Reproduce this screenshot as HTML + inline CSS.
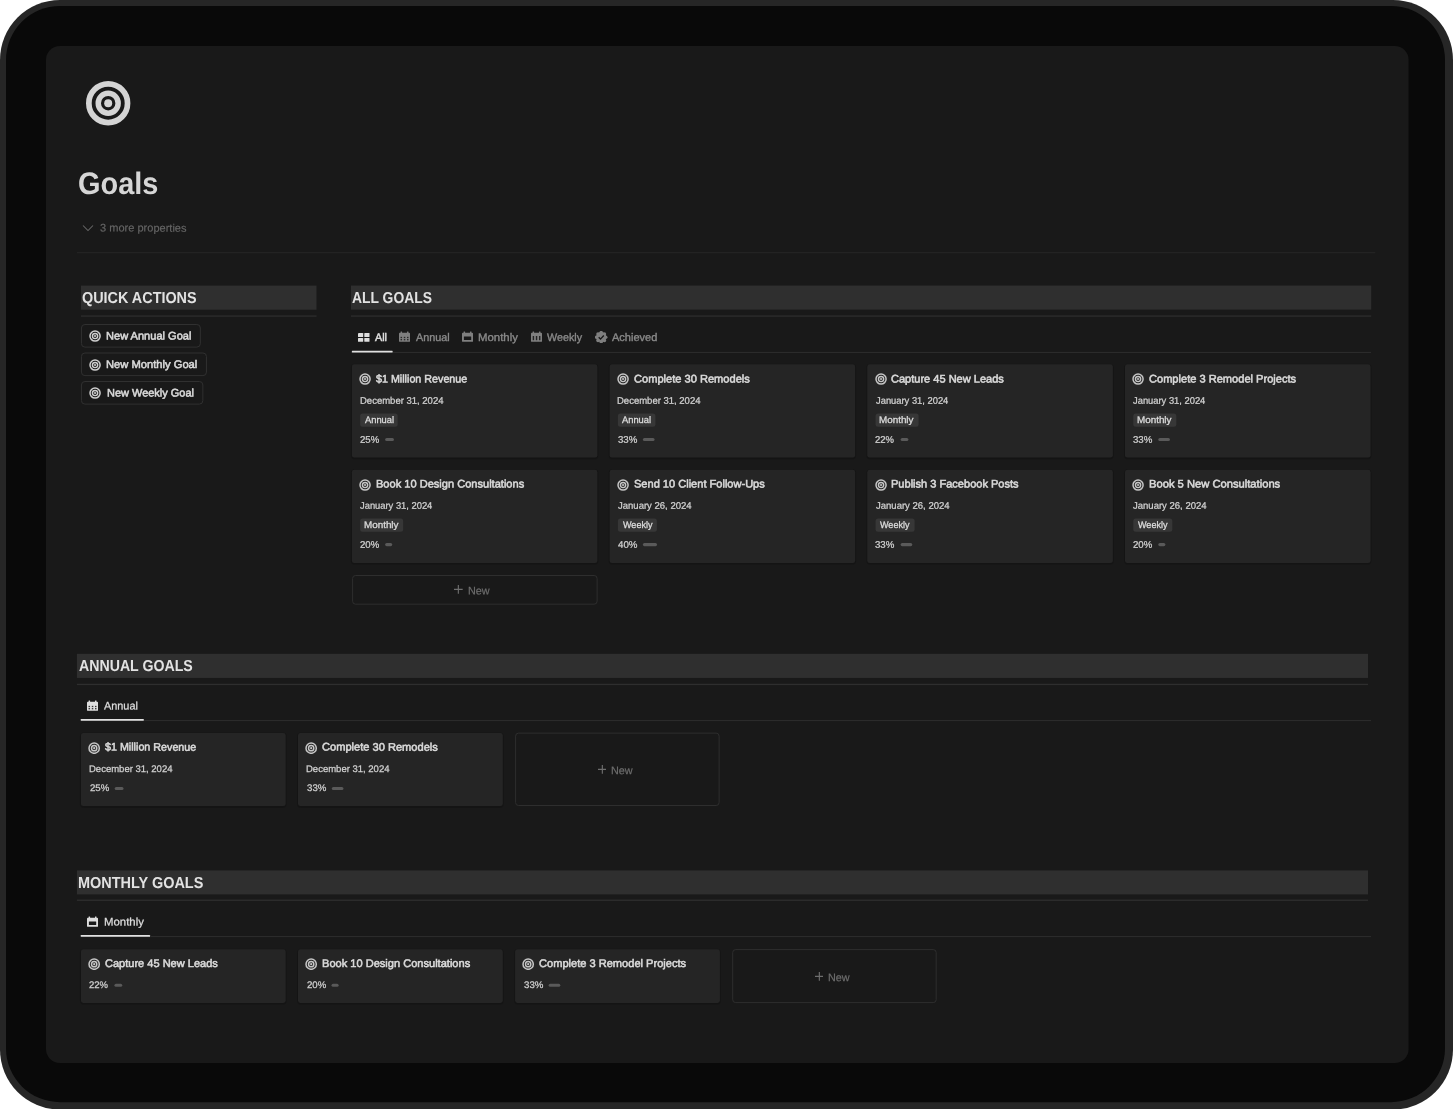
<!DOCTYPE html><html><head><meta charset="utf-8"><title>Goals</title><style>
*{box-sizing:border-box;margin:0;padding:0}
html,body{width:1456px;height:1109px;overflow:hidden;background:#fff}
body{font-family:"Liberation Sans",sans-serif;color:#d4d4d4;position:relative}
.abs{position:absolute}
.t{position:absolute;white-space:nowrap;text-rendering:geometricPrecision}
</style></head><body>
<div id="root" style="position:absolute;left:0;top:0;width:1456px;height:1109px;will-change:transform">
<svg class="abs" style="left:0;top:0" width="1456" height="1109" viewBox="0 0 1456 1109"><rect x="0.00" y="0.00" width="1453.00" height="1109.50" fill="#262626" rx="60"/><rect x="6.00" y="6.00" width="1439.00" height="1096.20" fill="#090909" rx="54"/><rect x="46.00" y="46.00" width="1362.60" height="1017.00" fill="#191919" rx="14"/><rect x="77.00" y="252.20" width="1298.20" height="1.00" fill="#272727"/><rect x="80.95" y="285.60" width="235.55" height="24.10" fill="#2f2f2f"/><rect x="80.95" y="315.40" width="235.55" height="1.30" fill="#2e2e2e"/><rect x="81.45" y="324.50" width="118.90" height="22.60" fill="none" rx="3.5" stroke="#303030" stroke-width="1"/><rect x="81.45" y="353.00" width="125.00" height="22.60" fill="none" rx="3.5" stroke="#303030" stroke-width="1"/><rect x="81.45" y="381.50" width="121.40" height="22.60" fill="none" rx="3.5" stroke="#303030" stroke-width="1"/><rect x="351.00" y="285.55" width="1020.20" height="24.10" fill="#2f2f2f"/><rect x="351.00" y="315.40" width="1020.20" height="1.30" fill="#2e2e2e"/><rect x="351.00" y="351.90" width="1020.00" height="1.10" fill="#2b2b2b"/><rect x="350.85" y="363.70" width="247.55" height="95.70" fill="#000" rx="4" fill-opacity="0.16"/><rect x="351.85" y="364.30" width="245.55" height="93.30" fill="#252525" rx="2.4"/><rect x="360.15" y="413.45" width="37.50" height="13.30" fill="#373737" rx="2.5"/><rect x="385.15" y="437.95" width="8.82" height="3.10" fill="#5a5a5a" rx="1.55"/><rect x="608.60" y="363.70" width="247.55" height="95.70" fill="#000" rx="4" fill-opacity="0.16"/><rect x="609.60" y="364.30" width="245.55" height="93.30" fill="#252525" rx="2.4"/><rect x="617.90" y="413.45" width="37.50" height="13.30" fill="#373737" rx="2.5"/><rect x="642.90" y="437.95" width="11.65" height="3.10" fill="#5a5a5a" rx="1.55"/><rect x="866.30" y="363.70" width="247.55" height="95.70" fill="#000" rx="4" fill-opacity="0.16"/><rect x="867.30" y="364.30" width="245.55" height="93.30" fill="#252525" rx="2.4"/><rect x="875.60" y="413.45" width="43.00" height="13.30" fill="#373737" rx="2.5"/><rect x="900.60" y="437.95" width="7.77" height="3.10" fill="#5a5a5a" rx="1.55"/><rect x="1124.00" y="363.70" width="247.55" height="95.70" fill="#000" rx="4" fill-opacity="0.16"/><rect x="1125.00" y="364.30" width="245.55" height="93.30" fill="#252525" rx="2.4"/><rect x="1133.30" y="413.45" width="43.00" height="13.30" fill="#373737" rx="2.5"/><rect x="1158.30" y="437.95" width="11.65" height="3.10" fill="#5a5a5a" rx="1.55"/><rect x="350.85" y="469.15" width="247.55" height="95.70" fill="#000" rx="4" fill-opacity="0.16"/><rect x="351.85" y="469.75" width="245.55" height="93.30" fill="#252525" rx="2.4"/><rect x="360.15" y="518.45" width="43.00" height="13.30" fill="#373737" rx="2.5"/><rect x="385.15" y="543.05" width="7.06" height="3.10" fill="#5a5a5a" rx="1.55"/><rect x="608.60" y="469.15" width="247.55" height="95.70" fill="#000" rx="4" fill-opacity="0.16"/><rect x="609.60" y="469.75" width="245.55" height="93.30" fill="#252525" rx="2.4"/><rect x="617.90" y="518.45" width="39.00" height="13.30" fill="#373737" rx="2.5"/><rect x="642.90" y="543.05" width="14.12" height="3.10" fill="#5a5a5a" rx="1.55"/><rect x="866.30" y="469.15" width="247.55" height="95.70" fill="#000" rx="4" fill-opacity="0.16"/><rect x="867.30" y="469.75" width="245.55" height="93.30" fill="#252525" rx="2.4"/><rect x="875.60" y="518.45" width="39.00" height="13.30" fill="#373737" rx="2.5"/><rect x="900.60" y="543.05" width="11.65" height="3.10" fill="#5a5a5a" rx="1.55"/><rect x="1124.00" y="469.15" width="247.55" height="95.70" fill="#000" rx="4" fill-opacity="0.16"/><rect x="1125.00" y="469.75" width="245.55" height="93.30" fill="#252525" rx="2.4"/><rect x="1133.30" y="518.45" width="39.00" height="13.30" fill="#373737" rx="2.5"/><rect x="1158.30" y="543.05" width="7.06" height="3.10" fill="#5a5a5a" rx="1.55"/><rect x="352.60" y="575.50" width="244.50" height="28.70" fill="none" rx="3" stroke="#2e2e2e" stroke-width="1"/><rect x="76.90" y="653.85" width="1291.10" height="24.10" fill="#2f2f2f"/><rect x="76.90" y="683.80" width="1291.10" height="1.30" fill="#2e2e2e"/><rect x="81.00" y="720.00" width="1290.00" height="1.10" fill="#2b2b2b"/><rect x="79.90" y="732.50" width="206.80" height="75.40" fill="#000" rx="4" fill-opacity="0.16"/><rect x="80.90" y="733.10" width="204.80" height="73.00" fill="#252525" rx="2.4"/><rect x="114.70" y="786.95" width="8.82" height="3.10" fill="#5a5a5a" rx="1.55"/><rect x="297.00" y="732.50" width="206.80" height="75.40" fill="#000" rx="4" fill-opacity="0.16"/><rect x="298.00" y="733.10" width="204.80" height="73.00" fill="#252525" rx="2.4"/><rect x="331.80" y="786.95" width="11.65" height="3.10" fill="#5a5a5a" rx="1.55"/><rect x="515.60" y="733.10" width="203.50" height="72.40" fill="none" rx="3" stroke="#2e2e2e" stroke-width="1"/><rect x="76.90" y="870.40" width="1291.10" height="24.00" fill="#2f2f2f"/><rect x="76.90" y="899.60" width="1291.10" height="1.30" fill="#2e2e2e"/><rect x="81.00" y="936.00" width="1290.00" height="1.10" fill="#2b2b2b"/><rect x="79.90" y="948.65" width="206.80" height="56.15" fill="#000" rx="4" fill-opacity="0.16"/><rect x="80.90" y="949.25" width="204.80" height="53.75" fill="#252525" rx="2.4"/><rect x="114.45" y="983.75" width="7.77" height="3.10" fill="#5a5a5a" rx="1.55"/><rect x="297.00" y="948.65" width="206.80" height="56.15" fill="#000" rx="4" fill-opacity="0.16"/><rect x="298.00" y="949.25" width="204.80" height="53.75" fill="#252525" rx="2.4"/><rect x="331.55" y="983.75" width="7.06" height="3.10" fill="#5a5a5a" rx="1.55"/><rect x="514.10" y="948.65" width="206.80" height="56.15" fill="#000" rx="4" fill-opacity="0.16"/><rect x="515.10" y="949.25" width="204.80" height="53.75" fill="#252525" rx="2.4"/><rect x="548.65" y="983.75" width="11.65" height="3.10" fill="#5a5a5a" rx="1.55"/><rect x="732.70" y="949.60" width="203.50" height="53.00" fill="none" rx="3" stroke="#2e2e2e" stroke-width="1"/></svg>
<svg class="abs" style="left:85.30px;top:79.60px" width="46.40" height="46.40" viewBox="-1 -1 46.4 46.4"><circle cx="22.2" cy="22.2" r="19.35" fill="none" stroke="#d4d4d4" stroke-width="5.7"/><circle cx="22.2" cy="22.2" r="9.95" fill="none" stroke="#d4d4d4" stroke-width="5.5"/><circle cx="22.2" cy="22.2" r="4" fill="#d4d4d4"/></svg>
<div class="t" style="left:78.21px;top:164px;font-size:31px;line-height:39px;color:#d6d6d6;font-weight:700;transform:scaleX(0.9338);transform-origin:0 0;">Goals</div>
<svg class="abs" style="left:81.5px;top:223.4px" width="12" height="10" viewBox="0 0 12 10"><path d="M1 2.5 L6 7.5 L11 2.5" fill="none" stroke="#676767" stroke-width="1.05"/></svg>
<div class="t" style="left:100.33px;top:221px;font-size:11px;line-height:16px;color:#656565;transform:translateY(-0.40px) rotate(0.03deg) scaleX(1.0036);transform-origin:0 0;-webkit-text-stroke:0.15px #656565;">3 more properties</div>
<div class="t" style="left:82.06px;top:288px;font-size:15.85px;line-height:22px;color:#e2e2e2;font-weight:700;transform:scaleX(0.9084);transform-origin:0 0;">QUICK ACTIONS</div>
<svg class="abs" style="left:88.79px;top:330.04px" width="12.12" height="12.12" viewBox="-1 -1 46.4 46.4"><circle cx="22.2" cy="22.2" r="19.35" fill="none" stroke="#cfcfcf" stroke-width="5.7"/><circle cx="22.2" cy="22.2" r="9.95" fill="none" stroke="#cfcfcf" stroke-width="5.5"/><circle cx="22.2" cy="22.2" r="4" fill="#cfcfcf"/></svg>
<div class="t" style="left:106.49px;top:329px;font-size:11px;line-height:16px;color:#dadada;transform:translateY(-0.50px) rotate(0.03deg) scaleX(1.0052);transform-origin:0 0;-webkit-text-stroke:0.55px #dadada;">New Annual Goal</div>
<svg class="abs" style="left:88.79px;top:358.54px" width="12.12" height="12.12" viewBox="-1 -1 46.4 46.4"><circle cx="22.2" cy="22.2" r="19.35" fill="none" stroke="#cfcfcf" stroke-width="5.7"/><circle cx="22.2" cy="22.2" r="9.95" fill="none" stroke="#cfcfcf" stroke-width="5.5"/><circle cx="22.2" cy="22.2" r="4" fill="#cfcfcf"/></svg>
<div class="t" style="left:106.48px;top:357px;font-size:11px;line-height:16px;color:#dadada;transform:scaleX(1.0160);transform-origin:0 0;-webkit-text-stroke:0.55px #dadada;">New Monthly Goal</div>
<svg class="abs" style="left:88.79px;top:387.04px" width="12.12" height="12.12" viewBox="-1 -1 46.4 46.4"><circle cx="22.2" cy="22.2" r="19.35" fill="none" stroke="#cfcfcf" stroke-width="5.7"/><circle cx="22.2" cy="22.2" r="9.95" fill="none" stroke="#cfcfcf" stroke-width="5.5"/><circle cx="22.2" cy="22.2" r="4" fill="#cfcfcf"/></svg>
<div class="t" style="left:106.50px;top:386px;font-size:11px;line-height:16px;color:#dadada;transform:translateY(-0.50px) rotate(0.03deg) scaleX(0.9978);transform-origin:0 0;-webkit-text-stroke:0.55px #dadada;">New Weekly Goal</div>
<div class="t" style="left:352.32px;top:288px;font-size:15.85px;line-height:22px;color:#e2e2e2;font-weight:700;transform:scaleX(0.8761);transform-origin:0 0;">ALL GOALS</div>
<svg class="abs" style="left:358px;top:333.1px" width="11.5" height="8.8" viewBox="0 0 11.5 8.8"><rect x="0" y="0" width="5.2" height="3.9" rx="0.5" fill="#dedede"/><rect x="6.3" y="0" width="5.2" height="3.9" rx="0.5" fill="#dedede"/><rect x="0" y="4.9" width="5.2" height="3.9" rx="0.5" fill="#dedede"/><rect x="6.3" y="4.9" width="5.2" height="3.9" rx="0.5" fill="#dedede"/></svg>
<div class="t" style="left:374.58px;top:331px;font-size:11px;line-height:16px;color:#e0e0e0;transform:translateY(-0.90px) rotate(0.03deg) scaleX(0.9806);transform-origin:0 0;-webkit-text-stroke:0.45px #e0e0e0;">All</div>
<svg class="abs" style="left:398.9px;top:331.2px" width="11.1" height="10.8" viewBox="0 0 11.1 10.8"><rect x="0" y="1.8" width="11.1" height="9" rx="0.9" fill="#7f7f7f"/><rect x="1.6" y="0.4" width="1.5" height="3" rx="0.4" fill="#7f7f7f"/><rect x="8" y="0.4" width="1.5" height="3" rx="0.4" fill="#7f7f7f"/><rect x="1.55" y="5.85" width="1.5" height="1.3" fill="#191919" fill-opacity="0.85"/><rect x="1.55" y="8.05" width="1.5" height="1.3" fill="#191919" fill-opacity="0.85"/><rect x="4.80" y="5.85" width="1.5" height="1.3" fill="#191919" fill-opacity="0.85"/><rect x="4.80" y="8.05" width="1.5" height="1.3" fill="#191919" fill-opacity="0.85"/><rect x="8.00" y="5.85" width="1.5" height="1.3" fill="#191919" fill-opacity="0.85"/><rect x="8.00" y="8.05" width="1.5" height="1.3" fill="#191919" fill-opacity="0.85"/></svg>
<div class="t" style="left:415.73px;top:331px;font-size:11px;line-height:16px;color:#8a8a8a;transform:translateY(-0.90px) rotate(0.03deg) scaleX(0.9849);transform-origin:0 0;-webkit-text-stroke:0.35px #8a8a8a;">Annual</div>
<svg class="abs" style="left:462.0px;top:331.2px" width="11.1" height="10.8" viewBox="0 0 11.1 10.8"><rect x="0" y="1.8" width="11.1" height="9" rx="0.9" fill="#7f7f7f"/><rect x="1.6" y="0.4" width="1.5" height="3" rx="0.4" fill="#7f7f7f"/><rect x="8" y="0.4" width="1.5" height="3" rx="0.4" fill="#7f7f7f"/><rect x="1.9" y="5.5" width="7.3" height="3.6" rx="0.3" fill="#191919"/></svg>
<div class="t" style="left:477.92px;top:331px;font-size:11px;line-height:16px;color:#8a8a8a;transform:translateY(-0.90px) rotate(0.03deg) scaleX(1.0349);transform-origin:0 0;-webkit-text-stroke:0.35px #8a8a8a;">Monthly</div>
<svg class="abs" style="left:531.2px;top:331.2px" width="11.1" height="10.8" viewBox="0 0 11.1 10.8"><rect x="0" y="1.8" width="11.1" height="9" rx="0.9" fill="#7f7f7f"/><rect x="1.6" y="0.4" width="1.5" height="3" rx="0.4" fill="#7f7f7f"/><rect x="8" y="0.4" width="1.5" height="3" rx="0.4" fill="#7f7f7f"/><rect x="1.70" y="5" width="1.4" height="4.2" fill="#191919" fill-opacity="0.9"/><rect x="4.85" y="5" width="1.4" height="4.2" fill="#191919" fill-opacity="0.9"/><rect x="8.00" y="5" width="1.4" height="4.2" fill="#191919" fill-opacity="0.9"/></svg>
<div class="t" style="left:547.31px;top:331px;font-size:11px;line-height:16px;color:#8a8a8a;transform:translateY(-0.90px) rotate(0.03deg) scaleX(0.9778);transform-origin:0 0;-webkit-text-stroke:0.35px #8a8a8a;">Weekly</div>
<svg class="abs" style="left:595.2px;top:331.1px" width="12.4" height="12.4" viewBox="0 0 12.4 12.4"><circle cx="6.2" cy="6.2" r="5.1" fill="#7f7f7f"/><circle cx="10.75" cy="6.20" r="1.75" fill="#7f7f7f"/><circle cx="9.42" cy="9.42" r="1.75" fill="#7f7f7f"/><circle cx="6.20" cy="10.75" r="1.75" fill="#7f7f7f"/><circle cx="2.98" cy="9.42" r="1.75" fill="#7f7f7f"/><circle cx="1.65" cy="6.20" r="1.75" fill="#7f7f7f"/><circle cx="2.98" cy="2.98" r="1.75" fill="#7f7f7f"/><circle cx="6.20" cy="1.65" r="1.75" fill="#7f7f7f"/><circle cx="9.42" cy="2.98" r="1.75" fill="#7f7f7f"/><path d="M3.7 6.3l1.8 1.8 3.3-3.6" fill="none" stroke="#191919" stroke-width="1.35"/></svg>
<div class="t" style="left:612.23px;top:331px;font-size:11px;line-height:16px;color:#8a8a8a;transform:translateY(-0.90px) rotate(0.03deg) scaleX(1.0016);transform-origin:0 0;-webkit-text-stroke:0.35px #8a8a8a;">Achieved</div>
<svg class="abs" style="left:350px;top:349px" width="44" height="5" viewBox="0 0 44 5"><rect x="1.85" y="1.80" width="40.8" height="1.7" rx="0.4" fill="#e0e0e0"/></svg>
<svg class="abs" style="left:359.24px;top:373.36px" width="12.12" height="12.12" viewBox="-1 -1 46.4 46.4"><circle cx="22.2" cy="22.2" r="19.35" fill="none" stroke="#c6c6c6" stroke-width="5.7"/><circle cx="22.2" cy="22.2" r="9.95" fill="none" stroke="#c6c6c6" stroke-width="5.5"/><circle cx="22.2" cy="22.2" r="4" fill="#c6c6c6"/></svg>
<div class="t" style="left:375.95px;top:372px;font-size:11px;line-height:16px;color:#dadada;transform:translateY(-0.45px) rotate(0.03deg) scaleX(0.9757);transform-origin:0 0;-webkit-text-stroke:0.55px #dadada;">$1 Million Revenue</div>
<div class="t" style="left:359.52px;top:394px;font-size:9.5px;line-height:15px;color:#d2d2d2;transform:translateY(-0.30px) rotate(0.03deg) scaleX(1.0002);transform-origin:0 0;-webkit-text-stroke:0.25px #d2d2d2;">December 31, 2024</div>
<div class="t" style="left:364.63px;top:413px;font-size:9.5px;line-height:15px;color:#dcdcdc;transform:translateY(-0.10px) rotate(0.03deg) scaleX(0.9814);transform-origin:0 0;-webkit-text-stroke:0.3px #dcdcdc;">Annual</div>
<div class="t" style="left:359.82px;top:433px;font-size:9.5px;line-height:15px;color:#d2d2d2;transform:translateY(-0.30px) rotate(0.03deg) scaleX(1.0109);transform-origin:0 0;-webkit-text-stroke:0.25px #d2d2d2;">25%</div>
<svg class="abs" style="left:616.99px;top:373.36px" width="12.12" height="12.12" viewBox="-1 -1 46.4 46.4"><circle cx="22.2" cy="22.2" r="19.35" fill="none" stroke="#c6c6c6" stroke-width="5.7"/><circle cx="22.2" cy="22.2" r="9.95" fill="none" stroke="#c6c6c6" stroke-width="5.5"/><circle cx="22.2" cy="22.2" r="4" fill="#c6c6c6"/></svg>
<div class="t" style="left:633.70px;top:372px;font-size:11px;line-height:16px;color:#dadada;transform:translateY(-0.45px) rotate(0.03deg) scaleX(1.0079);transform-origin:0 0;-webkit-text-stroke:0.55px #dadada;">Complete 30 Remodels</div>
<div class="t" style="left:617.27px;top:394px;font-size:9.5px;line-height:15px;color:#d2d2d2;transform:translateY(-0.30px) rotate(0.03deg) scaleX(1.0002);transform-origin:0 0;-webkit-text-stroke:0.25px #d2d2d2;">December 31, 2024</div>
<div class="t" style="left:622.38px;top:413px;font-size:9.5px;line-height:15px;color:#dcdcdc;transform:translateY(-0.10px) rotate(0.03deg) scaleX(0.9814);transform-origin:0 0;-webkit-text-stroke:0.3px #dcdcdc;">Annual</div>
<div class="t" style="left:617.68px;top:433px;font-size:9.5px;line-height:15px;color:#d2d2d2;transform:translateY(-0.30px) rotate(0.03deg) scaleX(1.0182);transform-origin:0 0;-webkit-text-stroke:0.25px #d2d2d2;">33%</div>
<svg class="abs" style="left:874.69px;top:373.36px" width="12.12" height="12.12" viewBox="-1 -1 46.4 46.4"><circle cx="22.2" cy="22.2" r="19.35" fill="none" stroke="#c6c6c6" stroke-width="5.7"/><circle cx="22.2" cy="22.2" r="9.95" fill="none" stroke="#c6c6c6" stroke-width="5.5"/><circle cx="22.2" cy="22.2" r="4" fill="#c6c6c6"/></svg>
<div class="t" style="left:891.40px;top:372px;font-size:11px;line-height:16px;color:#dadada;transform:translateY(-0.45px) rotate(0.03deg) scaleX(1.0029);transform-origin:0 0;-webkit-text-stroke:0.55px #dadada;">Capture 45 New Leads</div>
<div class="t" style="left:875.61px;top:394px;font-size:9.5px;line-height:15px;color:#d2d2d2;transform:translateY(-0.30px) rotate(0.03deg) scaleX(0.9850);transform-origin:0 0;-webkit-text-stroke:0.25px #d2d2d2;">January 31, 2024</div>
<div class="t" style="left:879.42px;top:413px;font-size:9.5px;line-height:15px;color:#dcdcdc;transform:translateY(-0.10px) rotate(0.03deg) scaleX(1.0366);transform-origin:0 0;-webkit-text-stroke:0.3px #dcdcdc;">Monthly</div>
<div class="t" style="left:875.28px;top:433px;font-size:9.5px;line-height:15px;color:#d2d2d2;transform:translateY(-0.30px) rotate(0.03deg) scaleX(0.9971);transform-origin:0 0;-webkit-text-stroke:0.25px #d2d2d2;">22%</div>
<svg class="abs" style="left:1132.39px;top:373.36px" width="12.12" height="12.12" viewBox="-1 -1 46.4 46.4"><circle cx="22.2" cy="22.2" r="19.35" fill="none" stroke="#c6c6c6" stroke-width="5.7"/><circle cx="22.2" cy="22.2" r="9.95" fill="none" stroke="#c6c6c6" stroke-width="5.5"/><circle cx="22.2" cy="22.2" r="4" fill="#c6c6c6"/></svg>
<div class="t" style="left:1149.10px;top:372px;font-size:11px;line-height:16px;color:#dadada;transform:translateY(-0.45px) rotate(0.03deg) scaleX(1.0067);transform-origin:0 0;-webkit-text-stroke:0.55px #dadada;">Complete 3 Remodel Projects</div>
<div class="t" style="left:1133.31px;top:394px;font-size:9.5px;line-height:15px;color:#d2d2d2;transform:translateY(-0.30px) rotate(0.03deg) scaleX(0.9850);transform-origin:0 0;-webkit-text-stroke:0.25px #d2d2d2;">January 31, 2024</div>
<div class="t" style="left:1137.12px;top:413px;font-size:9.5px;line-height:15px;color:#dcdcdc;transform:translateY(-0.10px) rotate(0.03deg) scaleX(1.0366);transform-origin:0 0;-webkit-text-stroke:0.3px #dcdcdc;">Monthly</div>
<div class="t" style="left:1133.08px;top:433px;font-size:9.5px;line-height:15px;color:#d2d2d2;transform:translateY(-0.30px) rotate(0.03deg) scaleX(1.0182);transform-origin:0 0;-webkit-text-stroke:0.25px #d2d2d2;">33%</div>
<svg class="abs" style="left:359.24px;top:478.81px" width="12.12" height="12.12" viewBox="-1 -1 46.4 46.4"><circle cx="22.2" cy="22.2" r="19.35" fill="none" stroke="#c6c6c6" stroke-width="5.7"/><circle cx="22.2" cy="22.2" r="9.95" fill="none" stroke="#c6c6c6" stroke-width="5.5"/><circle cx="22.2" cy="22.2" r="4" fill="#c6c6c6"/></svg>
<div class="t" style="left:375.95px;top:477px;font-size:11px;line-height:16px;color:#dadada;transform:translateY(-0.45px) rotate(0.03deg) scaleX(1.0057);transform-origin:0 0;-webkit-text-stroke:0.55px #dadada;">Book 10 Design Consultations</div>
<div class="t" style="left:360.16px;top:499px;font-size:9.5px;line-height:15px;color:#d2d2d2;transform:translateY(-0.30px) rotate(0.03deg) scaleX(0.9850);transform-origin:0 0;-webkit-text-stroke:0.25px #d2d2d2;">January 31, 2024</div>
<div class="t" style="left:363.97px;top:518px;font-size:9.5px;line-height:15px;color:#dcdcdc;transform:translateY(-0.10px) rotate(0.03deg) scaleX(1.0366);transform-origin:0 0;-webkit-text-stroke:0.3px #dcdcdc;">Monthly</div>
<div class="t" style="left:359.82px;top:538px;font-size:9.5px;line-height:15px;color:#d2d2d2;transform:translateY(-0.30px) rotate(0.03deg) scaleX(1.0109);transform-origin:0 0;-webkit-text-stroke:0.25px #d2d2d2;">20%</div>
<svg class="abs" style="left:616.99px;top:478.81px" width="12.12" height="12.12" viewBox="-1 -1 46.4 46.4"><circle cx="22.2" cy="22.2" r="19.35" fill="none" stroke="#c6c6c6" stroke-width="5.7"/><circle cx="22.2" cy="22.2" r="9.95" fill="none" stroke="#c6c6c6" stroke-width="5.5"/><circle cx="22.2" cy="22.2" r="4" fill="#c6c6c6"/></svg>
<div class="t" style="left:633.70px;top:477px;font-size:11px;line-height:16px;color:#dadada;transform:translateY(-0.45px) rotate(0.03deg) scaleX(1.0043);transform-origin:0 0;-webkit-text-stroke:0.55px #dadada;">Send 10 Client Follow-Ups</div>
<div class="t" style="left:617.91px;top:499px;font-size:9.5px;line-height:15px;color:#d2d2d2;transform:translateY(-0.30px) rotate(0.03deg) scaleX(1.0021);transform-origin:0 0;-webkit-text-stroke:0.25px #d2d2d2;">January 26, 2024</div>
<div class="t" style="left:622.61px;top:518px;font-size:9.5px;line-height:15px;color:#dcdcdc;transform:translateY(-0.10px) rotate(0.03deg) scaleX(0.9511);transform-origin:0 0;-webkit-text-stroke:0.3px #dcdcdc;">Weekly</div>
<div class="t" style="left:617.84px;top:538px;font-size:9.5px;line-height:15px;color:#d2d2d2;transform:translateY(-0.30px) rotate(0.03deg) scaleX(1.0234);transform-origin:0 0;-webkit-text-stroke:0.25px #d2d2d2;">40%</div>
<svg class="abs" style="left:874.69px;top:478.81px" width="12.12" height="12.12" viewBox="-1 -1 46.4 46.4"><circle cx="22.2" cy="22.2" r="19.35" fill="none" stroke="#c6c6c6" stroke-width="5.7"/><circle cx="22.2" cy="22.2" r="9.95" fill="none" stroke="#c6c6c6" stroke-width="5.5"/><circle cx="22.2" cy="22.2" r="4" fill="#c6c6c6"/></svg>
<div class="t" style="left:891.40px;top:477px;font-size:11px;line-height:16px;color:#dadada;transform:translateY(-0.45px) rotate(0.03deg) scaleX(1.0033);transform-origin:0 0;-webkit-text-stroke:0.55px #dadada;">Publish 3 Facebook Posts</div>
<div class="t" style="left:875.61px;top:499px;font-size:9.5px;line-height:15px;color:#d2d2d2;transform:translateY(-0.30px) rotate(0.03deg) scaleX(1.0021);transform-origin:0 0;-webkit-text-stroke:0.25px #d2d2d2;">January 26, 2024</div>
<div class="t" style="left:880.31px;top:518px;font-size:9.5px;line-height:15px;color:#dcdcdc;transform:translateY(-0.10px) rotate(0.03deg) scaleX(0.9511);transform-origin:0 0;-webkit-text-stroke:0.3px #dcdcdc;">Weekly</div>
<div class="t" style="left:875.38px;top:538px;font-size:9.5px;line-height:15px;color:#d2d2d2;transform:translateY(-0.30px) rotate(0.03deg) scaleX(1.0182);transform-origin:0 0;-webkit-text-stroke:0.25px #d2d2d2;">33%</div>
<svg class="abs" style="left:1132.39px;top:478.81px" width="12.12" height="12.12" viewBox="-1 -1 46.4 46.4"><circle cx="22.2" cy="22.2" r="19.35" fill="none" stroke="#c6c6c6" stroke-width="5.7"/><circle cx="22.2" cy="22.2" r="9.95" fill="none" stroke="#c6c6c6" stroke-width="5.5"/><circle cx="22.2" cy="22.2" r="4" fill="#c6c6c6"/></svg>
<div class="t" style="left:1149.10px;top:477px;font-size:11px;line-height:16px;color:#dadada;transform:translateY(-0.45px) rotate(0.03deg) scaleX(1.0171);transform-origin:0 0;-webkit-text-stroke:0.55px #dadada;">Book 5 New Consultations</div>
<div class="t" style="left:1133.31px;top:499px;font-size:9.5px;line-height:15px;color:#d2d2d2;transform:translateY(-0.30px) rotate(0.03deg) scaleX(1.0021);transform-origin:0 0;-webkit-text-stroke:0.25px #d2d2d2;">January 26, 2024</div>
<div class="t" style="left:1138.01px;top:518px;font-size:9.5px;line-height:15px;color:#dcdcdc;transform:translateY(-0.10px) rotate(0.03deg) scaleX(0.9511);transform-origin:0 0;-webkit-text-stroke:0.3px #dcdcdc;">Weekly</div>
<div class="t" style="left:1132.97px;top:538px;font-size:9.5px;line-height:15px;color:#d2d2d2;transform:translateY(-0.30px) rotate(0.03deg) scaleX(1.0109);transform-origin:0 0;-webkit-text-stroke:0.25px #d2d2d2;">20%</div>
<svg class="abs" style="left:454.2px;top:585.35px" width="8.7" height="8.7" viewBox="0 0 8.7 8.7"><path d="M4.35 0V8.7M0 4.35H8.7" stroke="#6e6e6e" stroke-width="1.15"/></svg>
<div class="t" style="left:467.96px;top:584px;font-size:11px;line-height:16px;color:#6e6e6e;transform:translateY(-0.50px) rotate(0.03deg) scaleX(0.9843);transform-origin:0 0;-webkit-text-stroke:0.2px #6e6e6e;">New</div>
<div class="t" style="left:78.66px;top:657px;font-size:15.85px;line-height:22px;color:#e2e2e2;font-weight:700;transform:translateY(-0.90px) rotate(0.03deg) scaleX(0.8933);transform-origin:0 0;">ANNUAL GOALS</div>
<svg class="abs" style="left:87px;top:699.9px" width="11.1" height="10.8" viewBox="0 0 11.1 10.8"><rect x="0" y="1.8" width="11.1" height="9" rx="0.9" fill="#dedede"/><rect x="1.6" y="0.4" width="1.5" height="3" rx="0.4" fill="#dedede"/><rect x="8" y="0.4" width="1.5" height="3" rx="0.4" fill="#dedede"/><rect x="1.55" y="5.85" width="1.5" height="1.3" fill="#191919" fill-opacity="0.85"/><rect x="1.55" y="8.05" width="1.5" height="1.3" fill="#191919" fill-opacity="0.85"/><rect x="4.80" y="5.85" width="1.5" height="1.3" fill="#191919" fill-opacity="0.85"/><rect x="4.80" y="8.05" width="1.5" height="1.3" fill="#191919" fill-opacity="0.85"/><rect x="8.00" y="5.85" width="1.5" height="1.3" fill="#191919" fill-opacity="0.85"/><rect x="8.00" y="8.05" width="1.5" height="1.3" fill="#191919" fill-opacity="0.85"/></svg>
<div class="t" style="left:103.63px;top:699px;font-size:11px;line-height:16px;color:#dedede;transform:translateY(-0.50px) rotate(0.03deg) scaleX(0.9894);transform-origin:0 0;-webkit-text-stroke:0.25px #dedede;">Annual</div>
<svg class="abs" style="left:79px;top:718px" width="67" height="5" viewBox="0 0 67 5"><rect x="1.75" y="1.10" width="63" height="1.7" rx="0.4" fill="#e0e0e0"/></svg>
<svg class="abs" style="left:88.28px;top:741.68px" width="12.33" height="12.33" viewBox="-1 -1 46.4 46.4"><circle cx="22.2" cy="22.2" r="19.35" fill="none" stroke="#c6c6c6" stroke-width="5.7"/><circle cx="22.2" cy="22.2" r="9.95" fill="none" stroke="#c6c6c6" stroke-width="5.5"/><circle cx="22.2" cy="22.2" r="4" fill="#c6c6c6"/></svg>
<div class="t" style="left:105.10px;top:740px;font-size:11px;line-height:16px;color:#dadada;transform:translateY(-0.40px) rotate(0.03deg) scaleX(0.9757);transform-origin:0 0;-webkit-text-stroke:0.55px #dadada;">$1 Million Revenue</div>
<div class="t" style="left:89.27px;top:762px;font-size:9.5px;line-height:15px;color:#d2d2d2;transform:scaleX(1.0002);transform-origin:0 0;-webkit-text-stroke:0.25px #d2d2d2;">December 31, 2024</div>
<div class="t" style="left:89.57px;top:781px;font-size:9.5px;line-height:15px;color:#d2d2d2;transform:scaleX(1.0109);transform-origin:0 0;-webkit-text-stroke:0.25px #d2d2d2;">25%</div>
<svg class="abs" style="left:305.38px;top:741.68px" width="12.33" height="12.33" viewBox="-1 -1 46.4 46.4"><circle cx="22.2" cy="22.2" r="19.35" fill="none" stroke="#c6c6c6" stroke-width="5.7"/><circle cx="22.2" cy="22.2" r="9.95" fill="none" stroke="#c6c6c6" stroke-width="5.5"/><circle cx="22.2" cy="22.2" r="4" fill="#c6c6c6"/></svg>
<div class="t" style="left:322.20px;top:740px;font-size:11px;line-height:16px;color:#dadada;transform:translateY(-0.40px) rotate(0.03deg) scaleX(1.0079);transform-origin:0 0;-webkit-text-stroke:0.55px #dadada;">Complete 30 Remodels</div>
<div class="t" style="left:306.37px;top:762px;font-size:9.5px;line-height:15px;color:#d2d2d2;transform:scaleX(1.0002);transform-origin:0 0;-webkit-text-stroke:0.25px #d2d2d2;">December 31, 2024</div>
<div class="t" style="left:306.78px;top:781px;font-size:9.5px;line-height:15px;color:#d2d2d2;transform:scaleX(1.0182);transform-origin:0 0;-webkit-text-stroke:0.25px #d2d2d2;">33%</div>
<svg class="abs" style="left:597.6px;top:765.0500000000001px" width="8.7" height="8.7" viewBox="0 0 8.7 8.7"><path d="M4.35 0V8.7M0 4.35H8.7" stroke="#6e6e6e" stroke-width="1.15"/></svg>
<div class="t" style="left:611.06px;top:764px;font-size:11px;line-height:16px;color:#6e6e6e;transform:translateY(-0.80px) rotate(0.03deg) scaleX(0.9843);transform-origin:0 0;-webkit-text-stroke:0.2px #6e6e6e;">New</div>
<div class="t" style="left:78.40px;top:873px;font-size:15.85px;line-height:22px;color:#e2e2e2;font-weight:700;transform:translateY(-0.40px) rotate(0.03deg) scaleX(0.9129);transform-origin:0 0;">MONTHLY GOALS</div>
<svg class="abs" style="left:87px;top:916.2px" width="11.1" height="10.8" viewBox="0 0 11.1 10.8"><rect x="0" y="1.8" width="11.1" height="9" rx="0.9" fill="#dedede"/><rect x="1.6" y="0.4" width="1.5" height="3" rx="0.4" fill="#dedede"/><rect x="8" y="0.4" width="1.5" height="3" rx="0.4" fill="#dedede"/><rect x="1.9" y="5.5" width="7.3" height="3.6" rx="0.3" fill="#191919"/></svg>
<div class="t" style="left:103.62px;top:915px;font-size:11px;line-height:16px;color:#dedede;transform:translateY(-0.40px) rotate(0.03deg) scaleX(1.0349);transform-origin:0 0;-webkit-text-stroke:0.25px #dedede;">Monthly</div>
<svg class="abs" style="left:79px;top:934px" width="73" height="5" viewBox="0 0 73 5"><rect x="1.75" y="1.10" width="69.3" height="1.7" rx="0.4" fill="#e0e0e0"/></svg>
<svg class="abs" style="left:88.28px;top:958.03px" width="12.33" height="12.33" viewBox="-1 -1 46.4 46.4"><circle cx="22.2" cy="22.2" r="19.35" fill="none" stroke="#c6c6c6" stroke-width="5.7"/><circle cx="22.2" cy="22.2" r="9.95" fill="none" stroke="#c6c6c6" stroke-width="5.5"/><circle cx="22.2" cy="22.2" r="4" fill="#c6c6c6"/></svg>
<div class="t" style="left:105.10px;top:956px;font-size:11px;line-height:16px;color:#dadada;transform:scaleX(1.0029);transform-origin:0 0;-webkit-text-stroke:0.55px #dadada;">Capture 45 New Leads</div>
<div class="t" style="left:89.48px;top:978px;font-size:9.5px;line-height:15px;color:#d2d2d2;transform:scaleX(0.9971);transform-origin:0 0;-webkit-text-stroke:0.25px #d2d2d2;">22%</div>
<svg class="abs" style="left:305.38px;top:958.03px" width="12.33" height="12.33" viewBox="-1 -1 46.4 46.4"><circle cx="22.2" cy="22.2" r="19.35" fill="none" stroke="#c6c6c6" stroke-width="5.7"/><circle cx="22.2" cy="22.2" r="9.95" fill="none" stroke="#c6c6c6" stroke-width="5.5"/><circle cx="22.2" cy="22.2" r="4" fill="#c6c6c6"/></svg>
<div class="t" style="left:322.20px;top:956px;font-size:11px;line-height:16px;color:#dadada;transform:scaleX(1.0057);transform-origin:0 0;-webkit-text-stroke:0.55px #dadada;">Book 10 Design Consultations</div>
<div class="t" style="left:306.57px;top:978px;font-size:9.5px;line-height:15px;color:#d2d2d2;transform:scaleX(1.0109);transform-origin:0 0;-webkit-text-stroke:0.25px #d2d2d2;">20%</div>
<svg class="abs" style="left:522.48px;top:958.03px" width="12.33" height="12.33" viewBox="-1 -1 46.4 46.4"><circle cx="22.2" cy="22.2" r="19.35" fill="none" stroke="#c6c6c6" stroke-width="5.7"/><circle cx="22.2" cy="22.2" r="9.95" fill="none" stroke="#c6c6c6" stroke-width="5.5"/><circle cx="22.2" cy="22.2" r="4" fill="#c6c6c6"/></svg>
<div class="t" style="left:539.30px;top:956px;font-size:11px;line-height:16px;color:#dadada;transform:scaleX(1.0067);transform-origin:0 0;-webkit-text-stroke:0.55px #dadada;">Complete 3 Remodel Projects</div>
<div class="t" style="left:523.78px;top:978px;font-size:9.5px;line-height:15px;color:#d2d2d2;transform:scaleX(1.0182);transform-origin:0 0;-webkit-text-stroke:0.25px #d2d2d2;">33%</div>
<svg class="abs" style="left:814.7px;top:972.0500000000001px" width="8.7" height="8.7" viewBox="0 0 8.7 8.7"><path d="M4.35 0V8.7M0 4.35H8.7" stroke="#6e6e6e" stroke-width="1.15"/></svg>
<div class="t" style="left:828.16px;top:971px;font-size:11px;line-height:16px;color:#6e6e6e;transform:translateY(-0.80px) rotate(0.03deg) scaleX(0.9843);transform-origin:0 0;-webkit-text-stroke:0.2px #6e6e6e;">New</div>
</div></body></html>
